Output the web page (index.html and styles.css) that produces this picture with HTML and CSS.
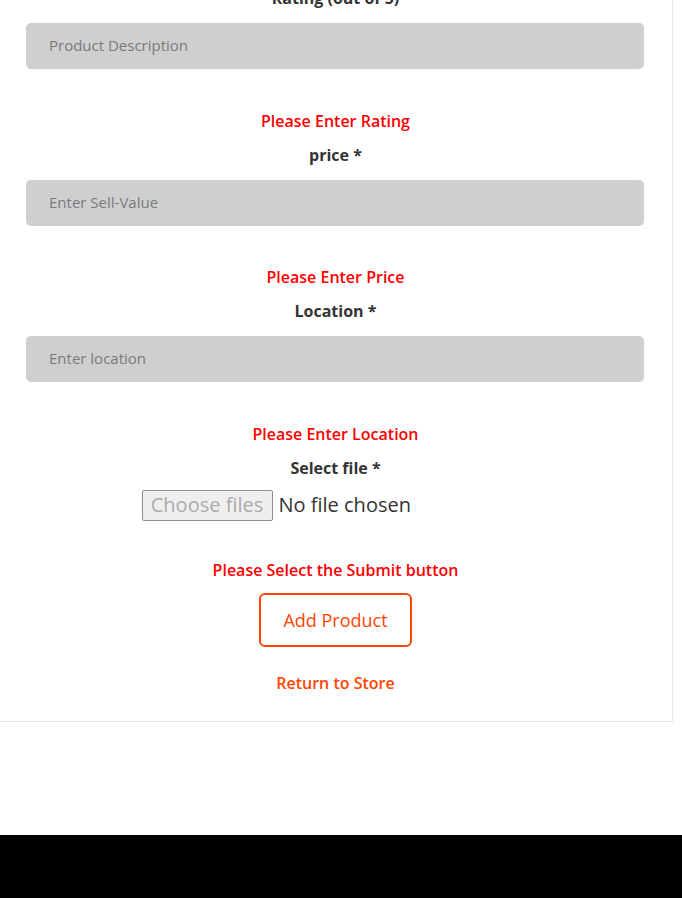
FILE: index.html
```html
<!DOCTYPE html>
<html lang="en">
<head>
<meta charset="utf-8">
<title>Add Product</title>
<link rel="stylesheet" href="styles.css">
</head>
<body>
<main class="card">
  <form class="form">
    <div class="group first">
      <label class="label">Rating (out of 5)</label>
      <div class="input">Product Description</div>
      <p class="error">Please Enter Rating</p>
    </div>
    <div class="group">
      <label class="label">price *</label>
      <div class="input">Enter Sell-Value</div>
      <p class="error">Please Enter Price</p>
    </div>
    <div class="group">
      <label class="label">Location *</label>
      <div class="input">Enter location</div>
      <p class="error">Please Enter Location</p>
    </div>
    <div class="group file-group">
      <label class="label">Select file *</label>
      <div class="file">
        <span class="file-btn">Choose files</span>
        <span class="file-text">No file chosen</span>
      </div>
      <p class="error submit-error">Please Select the Submit button</p>
    </div>
    <button type="button" class="add-btn">Add Product</button>
    <a class="return" href="#">Return to Store</a>
  </form>
</main>
<footer class="footer"></footer>
</body>
</html>
```
FILE: styles.css
```css
* { box-sizing: border-box; }
html, body { margin: 0; padding: 0; background: #fff; }
body {
  font-family: "Open Sans", "Liberation Sans", sans-serif;
  color: #333;
  width: 682px;
  height: 898px;
  overflow: hidden;
  display: flex;
  flex-direction: column;
}
.card {
  margin: -14px 9px 0 -2px;
  border: 1px solid #e9e9e9;
  border-top: none;
  padding-bottom: 26px;
}
.form {
  display: flex;
  flex-direction: column;
  align-items: center;
}
.group {
  display: flex;
  flex-direction: column;
  align-items: center;
  width: 100%;
  padding-bottom: 10px;
}
.label {
  font-size: 16px;
  font-weight: 700;
  line-height: 24px;
  color: #333;
}
.input {
  align-self: stretch;
  margin: 13px 28px 0 27px;
  height: 46px;
  background: #cfcfcf;
  border-radius: 5px;
  padding-left: 23px;
  font-size: 15px;
  line-height: 44px;
  color: #7a7a7a;
}
.error {
  margin: 39.5px 0 0;
  font-size: 16px;
  font-weight: 600;
  line-height: 24px;
  color: #ff0000;
}
.file {
  width: 388px;
  margin-top: 10px;
  display: flex;
  align-items: center;
  gap: 6px;
  font-size: 20px;
  line-height: 28px;
}
.file-btn {
  width: 131px;
  height: 31px;
  border: 1px solid #8f8f8f;
  border-radius: 2px;
  background: #efefef;
  color: #ababab;
  text-align: center;
  line-height: 28px;
}
.file-text { color: #333; }
.submit-error { margin-top: 37px; }
.file-group { padding-bottom: 11px; }
.add-btn {
  width: 153px;
  height: 54px;
  border: 2px solid #ff4500;
  border-radius: 6px;
  background: #fff;
  color: #ff4500;
  font-family: inherit;
  font-size: 18px;
  font-weight: 500;
  padding: 0;
}
.return {
  margin-top: 24px;
  font-size: 16px;
  font-weight: 600;
  line-height: 24px;
  color: #ff4500;
  text-decoration: none;
}
.footer {
  margin-top: auto;
  height: 63px;
  background: #000;
}
```
